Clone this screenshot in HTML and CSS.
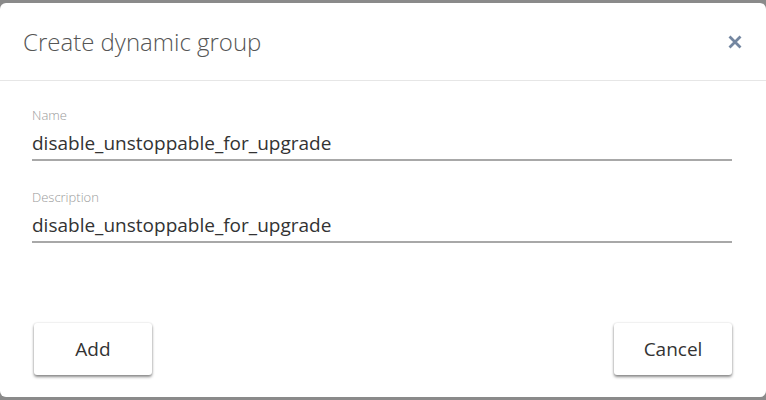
FILE: index.html
```html
<!DOCTYPE html>
<html lang="en">
<head>
    <meta charset="UTF-8">
    <title>Create dynamic group</title>
    <link rel="stylesheet" href="styles.css">
</head>
<body>
    <div class="dialog">
        <div class="dialog-header">
            <h2 class="dialog-title">Create dynamic group</h2>
            <button class="close-btn" aria-label="Close">
                <svg width="14" height="14" viewBox="0 0 14 14">
                    <path d="M1.5 1.5 L12.5 12.5 M12.5 1.5 L1.5 12.5" stroke="#7386a0" stroke-width="2.8"/>
                </svg>
            </button>
        </div>
        <div class="dialog-body">
            <div class="field">
                <label for="name">Name</label>
                <input id="name" type="text" value="disable_unstoppable_for_upgrade">
            </div>
            <div class="field">
                <label for="description">Description</label>
                <input id="description" type="text" value="disable_unstoppable_for_upgrade">
            </div>
        </div>
        <div class="dialog-footer">
            <button class="btn">Add</button>
            <button class="btn">Cancel</button>
        </div>
    </div>
</body>
</html>
```

FILE: styles.css
```css
:root {
    --backdrop: #8a8a8a;
    --text-color: #333;
    --muted: #9a9a9a;
    --line: #a8a8a8;
}

html, body {
    margin: 0;
    height: 100%;
}

body {
    background-color: var(--backdrop);
    font-family: 'Open Sans', 'Noto Sans', Arial, sans-serif;
    color: var(--text-color);
    padding-top: 3px;
    box-sizing: border-box;
}

.dialog {
    height: 394px;
    background-color: white;
    border-radius: 6px;
    display: flex;
    flex-direction: column;
}

.dialog-header {
    height: 77px;
    display: flex;
    align-items: center;
    justify-content: space-between;
    padding: 0 24px 0 23px;
    border-bottom: 1px solid #e6e6e6;
}

.dialog-title {
    margin: 0;
    font-size: 24px;
    font-weight: 300;
    color: #555;
}

.close-btn {
    background: none;
    border: none;
    padding: 0;
    cursor: pointer;
    display: flex;
}

.dialog-body {
    padding: 26px 34px 0 32px;
    display: flex;
    flex-direction: column;
    gap: 28px;
}

.field label {
    display: block;
    font-size: 13px;
    font-weight: 300;
    color: var(--muted);
    line-height: 16px;
}

.field input {
    display: block;
    width: 100%;
    box-sizing: border-box;
    border: none;
    border-bottom: 2px solid var(--line);
    padding: 8px 0 4px;
    font-family: inherit;
    font-size: 19px;
    line-height: 24px;
    color: var(--text-color);
    outline: none;
}

.dialog-footer {
    margin-top: auto;
    display: flex;
    justify-content: space-between;
    padding: 0 34px 22px;
}

.btn {
    width: 118px;
    height: 52px;
    background-color: white;
    border: none;
    border-radius: 3px;
    box-shadow: 0 2px 3px rgba(0, 0, 0, 0.45), 0 0 2px rgba(0, 0, 0, 0.15);
    font-family: inherit;
    font-size: 19px;
    color: var(--text-color);
    cursor: pointer;
}
```
